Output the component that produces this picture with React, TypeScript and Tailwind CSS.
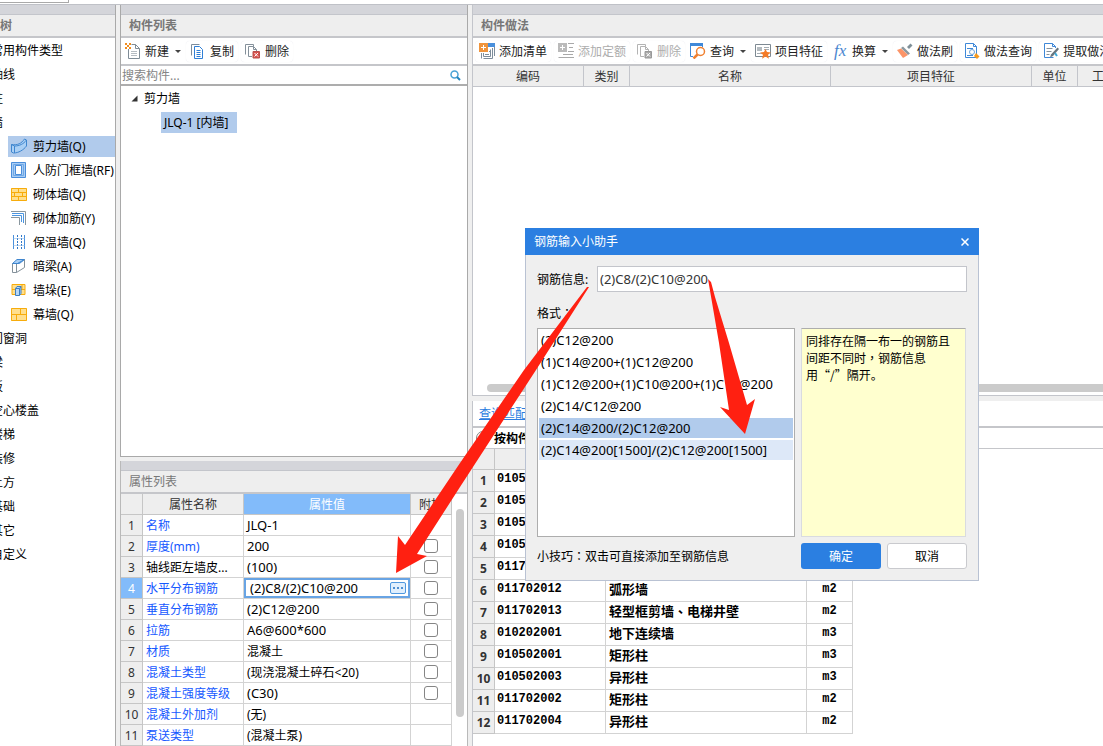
import type { ReactNode } from 'react';
import clsx from 'clsx';

/* ---------- icons ---------- */

function Svg({ children }: { children: ReactNode }) {
  return (
    <svg viewBox="0 0 16 16" className="h-4 w-4 shrink-0" fill="none" aria-hidden>
      {children}
    </svg>
  );
}

const icons = {
  create: (
    <Svg>
      <path d="M3.5 6v9.5h11v-10l-4-4H6.500M10.500 1.500v4h4" stroke="#7f8c96" />
      <path d="M6 8.500h6M6 10.500h6M6 12.500h6" stroke="#b5bcc2" />
      <path d="M0 0h2v2H0zM4 0h2v2H4zM2 2h2v2H2zM0 4h2v2H0zM4 4h2v2H4z" fill="#f08c1e" />
    </Svg>
  ),
  copy: (
    <Svg>
      <path d="M1.500 12.500v-11h8" stroke="#7d8d9c" />
      <path d="M4.500 3.500h5l3 3v9h-8z" fill="#fff" stroke="#2f7fd6" />
      <path d="M6.500 7.500h4M6.500 9.500h4M6.500 11.500h4M6.500 13.500h4" stroke="#2f7fd6" />
    </Svg>
  ),
  remove: (
    <Svg>
      <path d="M.5 11.500v-10h8v2M3.500 13.500v-10h5l3 3V8M8.500 3.500v3h3M3.500 13.500H7" stroke="#84909a" />
      <path d="M8 8.500h6.500V15H8z" fill="#d9534f" stroke="#b8504d" />
      <path d="m9.500 10 3.500 3.500m0-3.500-3.500 3.500" stroke="#fff" />
    </Svg>
  ),
  removeOff: (
    <Svg>
      <path d="M.5 11.500v-10h8v2M3.500 13.500v-10h5l3 3V8M8.500 3.500v3h3M3.500 13.500H7" stroke="#b3b3b3" />
      <path d="M8 8.500h6.500V15H8z" fill="#aaa" stroke="#999" />
      <path d="m9.500 10 3.500 3.500m0-3.500-3.500 3.500" stroke="#fff" />
    </Svg>
  ),
  addList: (
    <Svg>
      <path d="M9 0h7v4H9z" fill="#4a90dc" />
      <path d="M15.500 4v9M13.500 5v10.500h-9M4.500 10v3.500h7V6.500" stroke="#7d8d9c" />
      <path d="M2.500 10v5.500" stroke="#7d8d9c" />
      <path d="M6 11.500h4M10 8.500h1" stroke="#7d8d9c" />
      <path d="M0 0h9v9H0z" fill="#f0943c" />
      <path d="M4.500 2v5M2 4.500h5" stroke="#fff" />
    </Svg>
  ),
  addQuota: (
    <Svg>
      <path d="M0 0h9v9H0z" fill="#bababa" />
      <path d="M4.500 2v5M2 4.500h5" stroke="#fff" />
      <path d="M10 .5h6M11 4.500h4M10 8.500h6M5 11.500h10M.5 14.500H16" stroke="#a9a9a9" />
    </Svg>
  ),
  query: (
    <Svg>
      <path d="M0 0h13v3H0z" fill="#3f88d8" />
      <path d="M.5 3v10.500H3M12.500 3v1" stroke="#3f88d8" />
      <circle cx="10.500" cy="8.500" r="4" fill="#fff" stroke="#f08030" strokeWidth="1.500" />
      <path d="m7.500 11.500-4 4" stroke="#f08030" strokeWidth="2.500" />
    </Svg>
  ),
  feature: (
    <Svg>
      <path d="M.5 1.500h15v12H.5z" fill="#fff" stroke="#7d8992" />
      <path d="M2 4h5v4H2z" fill="#b4bbc0" />
      <path d="M9 4.500h5M9 6.500h5M2 10.500h5" stroke="#a5adb3" />
      <path d="m10.500 6 1.500 3 4 .4-3 2.400.9 4-3.400-2.200-3.400 2.200.9-4-3-2.400 4-.4z" fill="#f47b27" />
    </Svg>
  ),
  brush: (
    <Svg>
      <path d="M10 4 13.500.5l2 2L12 6z" fill="#7f8f98" />
      <path d="m6 3.500 7 7-2 1.500-7-7z" fill="#8b989f" />
      <path d="M4 5.500 0 7l6 8 5-3z" fill="#fb9468" />
    </Svg>
  ),
  queryDoc: (
    <Svg>
      <path d="M1.500.5h8l3 3v11h-11zM9.500.5v3h3" fill="#fff" stroke="#3f88d8" />
      <path d="M3 5.500h6M3 12.500h6" stroke="#3f88d8" />
      <circle cx="8" cy="9" r="2.500" fill="#fff" stroke="#6da3d8" />
      <path d="m12 10 3.500 3.500L13 16l-3-3z" fill="#f79a1e" />
    </Svg>
  ),
  extract: (
    <Svg>
      <path d="M12.500 5V3.500l-3-3h-8v14h9M9.500.5v3h3" stroke="#3f88d8" />
      <path d="M3.500 5.500h6M3.500 8.500h5M3.500 11.500h3" stroke="#87929b" />
      <path d="m14.500 4.500 1.500 1.500-6 7-3 1.500 1-3z" fill="#68757e" />
      <path d="m12 10 2 3" stroke="#3fa9d8" strokeWidth="2" />
    </Svg>
  ),
  shearWall: (
    <Svg>
      <path d="M.5 6.500c6 1 10-1 13-5.500l2 1v6c-3 4-8 7-13 7l-2-1z" fill="#a9cff5" stroke="#3f86cf" />
      <path d="M.5 6.500l3 1.500c5 0 9-2 12-6M3.500 8v7" stroke="#3f86cf" />
    </Svg>
  ),
  doorFrame: (
    <Svg>
      <path d="M.5 .5h14v15H.5z" fill="#a9cdf5" stroke="#4b8edb" />
      <path d="M4.500 3.500h6v9h-6z" fill="#fff" stroke="#4b8edb" />
      <path d="M2.500 2.500h10v11h-10z" stroke="#6ea8e6" />
    </Svg>
  ),
  brick: (
    <Svg>
      <path d="M0 2h16v13H0z" fill="#ffdf8e" />
      <path d="M.5 2.500h15v12H.5zM0 6.500h16M0 10.500h16M7.500 2v4.500M3.500 6.500v4M11.500 6.500v4M7.500 10.500V14" stroke="#f7ac0c" />
    </Svg>
  ),
  rebar: (
    <Svg>
      <path d="M0 1.500h14.500V15M0 7.500h8.500V15" stroke="#8a979f" />
      <path d="M1 3.500h11.500V13M1 5.500h9.500V12" stroke="#4b95e0" />
    </Svg>
  ),
  insulation: (
    <Svg>
      <path d="M2.500 1v14M13.500 1v14" stroke="#4a90dc" />
      <path d="M6.500 1v14M10.500 1v14" stroke="#2f77c8" strokeDasharray="2 1" />
      <path d="M2.500 4.500h11M2.500 11.500h11" stroke="#85b5e6" strokeDasharray="1 1" />
    </Svg>
  ),
  hiddenBeam: (
    <Svg>
      <path d="M1.500 5.500 6 1.500h7.500l-5 4z" fill="#a9cff5" stroke="#3f86cf" />
      <path d="M1.500 5.500v9h4v-9zM5.500 14.500l8-5v-8" fill="#fff" stroke="#84919a" />
      <path d="M1.500 5.500h5l7-4" stroke="#3f86cf" />
    </Svg>
  ),
  pier: (
    <Svg>
      <path d="M1 2.500h13v10H1z" fill="#ffdf8e" stroke="#f7ac0c" />
      <path d="M1 7.500h13M4.500 7.500v5M11 2.500v5" stroke="#f7ac0c" />
      <path d="M4.500 6.500 6 4.500h4v7l-1.500 2H4.500z" fill="#b7d7f7" stroke="#3f7fc0" />
      <path d="M4.500 6.500h4v7M8.500 6.500l1.500-2" stroke="#3f7fc0" />
    </Svg>
  ),
  curtain: (
    <Svg>
      <path d="M0 2h16v13H0z" fill="#ffdf8e" />
      <path d="M.5 2.500h15v12H.5zM0 8.500h16M9.500 2v6M5.500 8v6" stroke="#f7ac0c" />
    </Svg>
  ),
};

function FxIcon() {
  return (
    <span className="w-4 shrink-0 font-['Liberation_Serif',serif] text-[17px] leading-4 text-[#4a86cf] italic">
      fx
    </span>
  );
}

/* ---------- data ---------- */

type TreeItem = { label: string; icon?: ReactNode; active?: boolean };

const tree: TreeItem[] = [
  { label: '常用构件类型' },
  { label: '轴线' },
  { label: '柱' },
  { label: '墙' },
  { label: '剪力墙(Q)', icon: icons.shearWall, active: true },
  { label: '人防门框墙(RF)', icon: icons.doorFrame },
  { label: '砌体墙(Q)', icon: icons.brick },
  { label: '砌体加筋(Y)', icon: icons.rebar },
  { label: '保温墙(Q)', icon: icons.insulation },
  { label: '暗梁(A)', icon: icons.hiddenBeam },
  { label: '墙垛(E)', icon: icons.pier },
  { label: '幕墙(Q)', icon: icons.curtain },
  { label: '门窗洞' },
  { label: '梁' },
  { label: '板' },
  { label: '空心楼盖' },
  { label: '楼梯' },
  { label: '装修' },
  { label: '土方' },
  { label: '基础' },
  { label: '其它' },
  { label: '自定义' },
];

const props = [
  { name: '名称', value: 'JLQ-1', check: false },
  { name: '厚度(mm)', value: '200', check: true },
  { name: '轴线距左墙皮...', value: '(100)', check: true, plain: true },
  { name: '水平分布钢筋', value: '(2)C8/(2)C10@200', check: true, editing: true },
  { name: '垂直分布钢筋', value: '(2)C12@200', check: true },
  { name: '拉筋', value: 'A6@600*600', check: true },
  { name: '材质', value: '混凝土', check: true },
  { name: '混凝土类型', value: '(现浇混凝土碎石<20)', check: true },
  { name: '混凝土强度等级', value: '(C30)', check: true },
  { name: '混凝土外加剂', value: '(无)', check: false },
  { name: '泵送类型', value: '(混凝土泵)', check: false },
];

const matches = [
  ['010504001', '直形墙', 'm3'],
  ['010504002', '弧形墙', 'm3'],
  ['010504003', '短肢剪力墙', 'm3'],
  ['010504004', '挡土墙', 'm3'],
  ['011702011', '直形墙', 'm2'],
  ['011702012', '弧形墙', 'm2'],
  ['011702013', '轻型框剪墙、电梯井壁', 'm2'],
  ['010202001', '地下连续墙', 'm3'],
  ['010502001', '矩形柱', 'm3'],
  ['010502003', '异形柱', 'm3'],
  ['011702002', '矩形柱', 'm2'],
  ['011702004', '异形柱', 'm2'],
];

const formats = [
  '(2)C12@200',
  '(1)C14@200+(1)C12@200',
  '(1)C12@200+(1)C10@200+(1)C12@200',
  '(2)C14/C12@200',
  '(2)C14@200/(2)C12@200',
  '(2)C14@200[1500]/(2)C12@200[1500]',
];

// Latin-only values are set one step larger than the Chinese text
const isLatin = (s: string) => /^[\x20-\x7e]+$/.test(s);

/* ---------- shared parts ---------- */

// Punctuation centred in its full-width box
function Mark({ children }: { children: ReactNode }) {
  return <span className="font-['Noto_Sans_CJK_TC',sans-serif] leading-none">{children}</span>;
}

function PanelTitle({ children, bold }: { children: ReactNode; bold?: boolean }) {
  return (
    <>
      <div className="h-[10px] shrink-0 border-b border-[#c3c5cb] bg-[#d4d5da]" />
      <h2
        className={clsx(
          'h-[23px] shrink-0 border-b-2 border-[#c5c6ca] bg-[#eeeeee] px-2 leading-[21px] whitespace-nowrap text-[#777]',
          bold && 'font-bold',
        )}
      >
        {children}
      </h2>
    </>
  );
}

type ToolProps = { icon: ReactNode; label: string; menu?: boolean; disabled?: boolean };

function Tool({ icon, label, menu, disabled }: ToolProps) {
  return (
    <button
      type="button"
      disabled={disabled}
      className={clsx(
        'flex h-[21px] shrink-0 items-center gap-1 rounded-sm whitespace-nowrap',
        menu ? 'px-0.5' : 'px-1 shadow-[0_0_1px_#e3e3e8]',
        disabled ? 'text-[#adadad]' : 'text-[#222]',
      )}
    >
      {icon}
      {label}
      {menu && (
        <svg viewBox="0 0 6 3" className="ml-0.5 h-[3px] w-1.5" aria-hidden>
          <path d="M0 0h6L3 3z" fill="#444" />
        </svg>
      )}
    </button>
  );
}

function Toolbar({ children }: { children: ReactNode }) {
  return (
    <div className="flex h-7 shrink-0 items-center gap-[3px] overflow-hidden border-b-2 border-[#c5c6ca] bg-white pl-0.5">
      {children}
    </div>
  );
}

/* ---------- panels ---------- */

function NavTree() {
  return (
    <nav className="flex w-[116px] shrink-0 flex-col overflow-hidden border-r border-[#a9a9a9] bg-white">
      <div className="h-[10px] shrink-0 border-b border-[#c3c5cb] bg-[#d4d5da]" />
      <h2 className="h-[23px] shrink-0 border-b-2 border-[#c5c6ca] bg-[#eeeeee] leading-[21px] font-bold text-[#777]">
        树
      </h2>
      <ul>
        {tree.map((item) => (
          <li key={item.label} className="flex h-6 items-center whitespace-nowrap">
            {item.icon ? (
              <a
                href="#"
                className={clsx('ml-2 flex h-[21px] flex-1 items-center gap-1.5 pl-[3px]', item.active && 'bg-[#b1cbec]')}
              >
                {item.icon}
                {item.label}
              </a>
            ) : (
              <a href="#" className="-ml-[9px]">
                {item.label}
              </a>
            )}
          </li>
        ))}
      </ul>
    </nav>
  );
}

function ComponentList() {
  return (
    <section className="flex min-h-0 flex-1 flex-col border-x border-b border-[#a9a9a9] bg-white">
      <PanelTitle bold>构件列表</PanelTitle>
      <Toolbar>
        <Tool icon={icons.create} label="新建" menu />
        <Tool icon={icons.copy} label="复制" />
        <Tool icon={icons.remove} label="删除" />
      </Toolbar>
      <div className="flex h-5 shrink-0 items-center border-b-2 border-[#adadad] pr-1.5">
        <input
          aria-label="搜索构件"
          placeholder="搜索构件..."
          className="h-full min-w-0 flex-1 px-px outline-none placeholder:text-[#858585]"
        />
        <svg viewBox="0 0 11 11" className="h-[11px] w-[11px]" fill="none" aria-hidden>
          <circle cx="4.500" cy="4.500" r="3.500" stroke="#4aa3d6" strokeWidth="1.500" />
          <path d="m7 7 3 3" stroke="#2184bd" strokeWidth="2" />
        </svg>
      </div>
      <div>
        <div className="flex h-6 items-center gap-1.5 pl-2.5">
          <svg viewBox="0 0 7 7" className="h-[7px] w-[7px]" aria-hidden>
            <path d="M6.500 .5v6h-6z" fill="#333" />
          </svg>
          剪力墙
        </div>
        <div className="flex h-6 items-center pl-10">
          <span className="h-[21px] w-[76px] bg-[#b1cbec] pl-[3px] leading-[21px] whitespace-nowrap">JLQ-1 [内墙]</span>
        </div>
      </div>
    </section>
  );
}

function PropertyList() {
  return (
    <section className="flex h-[285px] shrink-0 flex-col border-x border-[#b9b9b9] bg-white">
      <PanelTitle>属性列表</PanelTitle>
      <div className="flex min-h-0 flex-1 overflow-hidden">
        <table className="w-[331px] table-fixed border-separate border-spacing-0 [&_td]:h-[21px] [&_td]:border-r [&_td]:border-b [&_td]:border-[#d3d3d3] [&_th]:h-[21px] [&_th]:border-r [&_th]:border-b [&_th]:border-[#c6c6c6] [&_th]:font-normal">
          <colgroup>
            <col className="w-[22px]" />
            <col className="w-[101px]" />
            <col className="w-[167px]" />
            <col className="w-[41px]" />
          </colgroup>
          <thead className="bg-[#eeeeee] text-[#333]">
            <tr>
              <th />
              <th>属性名称</th>
              <th className="bg-[#82bbfa] text-white">属性值</th>
              <th>附加</th>
            </tr>
          </thead>
          <tbody>
            {props.map((p, i) => (
              <tr key={p.name}>
                <th className={p.editing ? 'bg-[#82bbfa] text-white' : 'bg-[#eeeeee] text-[#333]'}>{i + 1}</th>
                <td className={clsx('truncate pl-[3px]', !p.plain && 'text-[#1558ff]')}>{p.name}</td>
                {p.editing ? (
                  <td className="p-0">
                    <div className="flex h-5 items-center border-2 border-[#68a4e4] pr-0.5">
                      <input
                        aria-label={p.name}
                        defaultValue={p.value}
                        className="h-4 min-w-0 flex-1 pl-1 text-[13px] outline-none"
                      />
                      <button
                        type="button"
                        aria-label="更多"
                        className="flex h-3 w-4 items-center justify-center gap-0.5 rounded-xs border border-[#4f98df] bg-[#e0effd]"
                      >
                        <i className="h-0.5 w-0.5 bg-[#4f8fd0]" />
                        <i className="h-0.5 w-0.5 bg-[#4f8fd0]" />
                        <i className="h-0.5 w-0.5 bg-[#4f8fd0]" />
                      </button>
                    </div>
                  </td>
                ) : (
                  <td className={clsx('truncate pl-[3px]', isLatin(p.value) && 'text-[13px]')}>{p.value}</td>
                )}
                <td className="p-0 text-center">
                  {p.check && (
                    <input
                      type="checkbox"
                      aria-label={`附加 ${p.name}`}
                      className="mx-auto block h-3.5 w-3.5 appearance-none rounded-[3px] border border-[#858585] bg-white"
                    />
                  )}
                </td>
              </tr>
            ))}
          </tbody>
        </table>
        <div className="mt-[15px] ml-1 h-[208px] w-2 rounded-full bg-[#cbcbcb]" />
      </div>
    </section>
  );
}

function Practice() {
  return (
    <section className="flex min-h-0 flex-1 flex-col overflow-hidden border-b border-l border-[#c3c5cb] bg-white">
      <PanelTitle bold>构件做法</PanelTitle>
      <Toolbar>
        <Tool icon={icons.addList} label="添加清单" />
        <Tool icon={icons.addQuota} label="添加定额" disabled />
        <Tool icon={icons.removeOff} label="删除" disabled />
        <Tool icon={icons.query} label="查询" menu />
        <Tool icon={icons.feature} label="项目特征" />
        <Tool icon={<FxIcon />} label="换算" menu />
        <Tool icon={icons.brush} label="做法刷" />
        <Tool icon={icons.queryDoc} label="做法查询" />
        <Tool icon={icons.extract} label="提取做法" />
      </Toolbar>
      <table className="w-[745px] table-fixed border-separate border-spacing-0 bg-[#eeeeee] text-[#333] [&_th]:h-[21px] [&_th]:border-r [&_th]:border-b [&_th]:border-[#c3c5cb] [&_th]:font-normal">
        <thead>
          <tr>
            <th className="w-[111px]">编码</th>
            <th className="w-[46px]">类别</th>
            <th className="w-[201px]">名称</th>
            <th className="w-[201px]">项目特征</th>
            <th className="w-[46px]">单位</th>
            <th className="pl-3.5 text-left">工程量表达式</th>
          </tr>
        </thead>
      </table>
      <div className="mt-auto mb-[3px] ml-3.5 h-2 shrink-0 rounded-l-full bg-[#cbcbcb]" />
    </section>
  );
}

function MatchList() {
  return (
    <section className="h-[345px] shrink-0 overflow-hidden border-l border-[#c3c5cb] bg-white">
      <div className="flex h-[27px] items-center border-b-2 border-[#c5c6ca] pl-1.5">
        <a href="#" className="text-[#2b7de0] underline">
          查询匹配清单
        </a>
      </div>
      <label className="flex h-[21px] items-center gap-1 border-b border-[#c5c6ca] pl-[3px] font-bold">
        <input
          type="radio"
          name="filter"
          className="h-3.5 w-3.5 appearance-none rounded-full border border-[#858585] bg-white"
        />
        按构件类型过滤
      </label>
      <table className="w-[380px] table-fixed border-separate border-spacing-0 [&_td]:h-[22px] [&_td]:border-r [&_td]:border-b [&_td]:border-[#d3d3d3] [&_td]:pt-0 [&_td]:pb-0.5 [&_th]:border-r [&_th]:border-b [&_th]:border-[#c6c6c6] [&_th]:bg-[#eeeeee]">
        <thead>
          <tr>
            <th className="h-[21px] w-[22px]" />
            <th className="w-[111px]">编码</th>
            <th className="w-[201px]">名称</th>
            <th className="w-[46px]">单位</th>
          </tr>
        </thead>
        <tbody className="font-bold">
          {matches.map(([code, name, unit], i) => (
            <tr key={code}>
              <th className="text-[#333]">{i + 1}</th>
              <td className="pl-0.5 font-['Liberation_Mono',monospace]">{code}</td>
              <td className="pl-[3px] text-[13px]">
                {name.split('、').map((part, n) => (
                  <span key={part}>
                    {n > 0 && <Mark>、</Mark>}
                    {part}
                  </span>
                ))}
              </td>
              <td className="text-center font-['Liberation_Mono',monospace]">{unit}</td>
            </tr>
          ))}
        </tbody>
      </table>
    </section>
  );
}

function RebarDialog() {
  return (
    <div
      role="dialog"
      aria-label="钢筋输入小助手"
      className="absolute top-[228px] left-[525px] w-[454px] border border-t-0 border-[#b9c2d3] bg-[#efefef]"
    >
      <div className="-mx-px flex h-[27px] items-center justify-between bg-[#2b7fe1] px-[9px] text-white">
        钢筋输入小助手
        <button type="button" aria-label="关闭" className="flex h-3 w-2.5 items-center justify-center">
          <svg viewBox="0 0 8 8" className="h-2 w-2" aria-hidden>
            <path d="m.5.5 7 7m0-7-7 7" stroke="#fff" strokeWidth="1.500" />
          </svg>
        </button>
      </div>
      <div className="px-[11px] pt-[11px] pb-[11px]">
        <div className="flex items-center">
          <label htmlFor="rebar" className="w-[60px] shrink-0">
            钢筋信息:
          </label>
          <input
            id="rebar"
            defaultValue="(2)C8/(2)C10@200"
            className="h-[26px] min-w-0 flex-1 border border-[#c3c5cb] bg-white px-0.5 text-[13px] text-[#333] outline-none"
          />
        </div>
        <p className="mt-[13px] mb-1.5 h-[17px]">
          格式<Mark>：</Mark>
        </p>
        <div className="flex gap-1.5">
          <ul className="h-[209px] w-[258px] border border-[#adadad] bg-white p-px text-[13px]">
            {formats.map((f, i) => (
              <li
                key={f}
                className={clsx(
                  'mb-0.5 h-5 pl-0.5 leading-5 whitespace-nowrap',
                  i === 4 && 'bg-[#b1cbec]',
                  i === 5 && 'bg-[#dde8f8]',
                )}
              >
                {f}
              </li>
            ))}
          </ul>
          <p className="mr-px flex-1 border border-[#d9dbe0] border-t-[#adadad] bg-[#ffffcf] px-1 py-1 whitespace-nowrap">
            同排存在隔一布一的钢筋且
            <br />
            间距不同时<Mark>，</Mark>钢筋信息
            <br />用<span className="font-['Noto_Sans_CJK_SC',sans-serif] leading-none">“/”</span>隔开。
          </p>
        </div>
        <div className="mt-1.5 flex items-center gap-1.5">
          <span className="flex-1">
            小技巧<Mark>：</Mark>双击可直接添加至钢筋信息
          </span>
          <button type="button" className="h-[26px] w-20 rounded-[3px] bg-[#2b7fe1] text-white">
            确定
          </button>
          <button type="button" className="h-[26px] w-20 rounded-[3px] border border-[#c9cace] bg-white">
            取消
          </button>
        </div>
      </div>
    </div>
  );
}

// Red callout arrows running from the dialog input to the property cell and the format list
function Arrows() {
  return (
    <svg
      viewBox="396 279 360 295"
      className="pointer-events-none absolute top-[279px] left-[396px] h-[295px] w-[360px]"
      fill="#ff2011"
      aria-hidden
    >
      <path d="M587 287h2L536 370 460 487 417 554l10 2-31 17 2-37 7 9 55-82 64-93z" />
      <path d="m708 279 3 3 4 15 14 46 18 62 8-6-10 35-25-27 9 3-10-67z" />
    </svg>
  );
}

export default function App() {
  return (
    <div className="relative flex h-screen flex-col overflow-hidden bg-[#efefef] font-['Noto_Sans','Noto_Sans_CJK_SC',sans-serif] text-xs leading-[17px] text-black">
      <div className="h-[5px] shrink-0 border-b border-[#bfc1c7] bg-white">
        <div className="h-[3px] w-[69px] border-r border-b border-[#a9a9a9]" />
      </div>
      <div className="flex min-h-0 flex-1 gap-1">
        <NavTree />
        <div className="flex w-[348px] shrink-0 flex-col gap-1">
          <ComponentList />
          <PropertyList />
        </div>
        <div className="flex min-w-0 flex-1 flex-col gap-[5px]">
          <Practice />
          <MatchList />
        </div>
      </div>
      <RebarDialog />
      <Arrows />
    </div>
  );
}
